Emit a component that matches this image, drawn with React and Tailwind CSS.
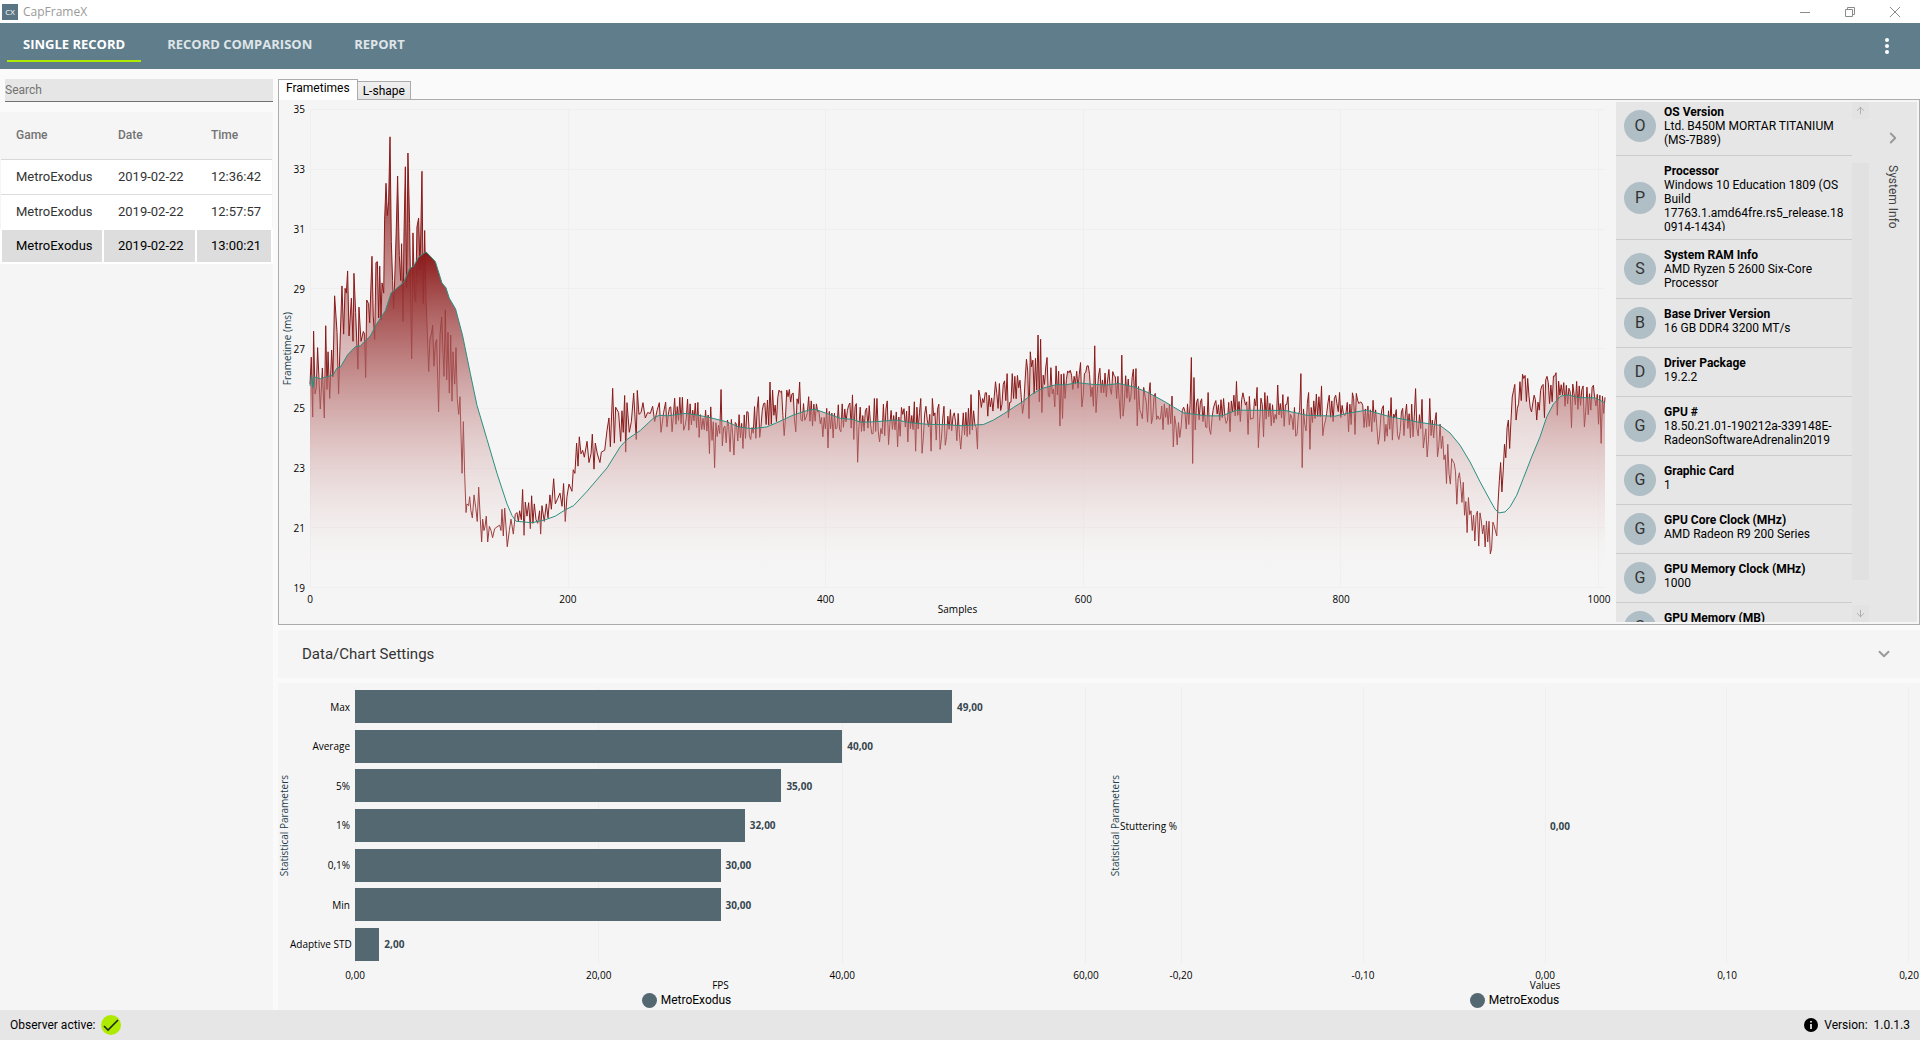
import { ArrowDown, ArrowUp, ChevronDown, ChevronRight } from "lucide-react";

const records = [
  { game: "MetroExodus", date: "2019-02-22", time: "12:36:42" },
  { game: "MetroExodus", date: "2019-02-22", time: "12:57:57" },
  { game: "MetroExodus", date: "2019-02-22", time: "13:00:21", selected: true },
];

const systemInfo = [
  ["OS Version", "Ltd. B450M MORTAR TITANIUM (MS-7B89)"],
  ["Processor", "Windows 10 Education 1809 (OS Build 17763.1.amd64fre.rs5_release.180914-1434)"],
  ["System RAM Info", "AMD Ryzen 5 2600 Six-Core Processor"],
  ["Base Driver Version", "16 GB DDR4 3200 MT/s"],
  ["Driver Package", "19.2.2"],
  ["GPU #", "18.50.21.01-190212a-339148E-RadeonSoftwareAdrenalin2019"],
  ["Graphic Card", "1"],
  ["GPU Core Clock (MHz)", "AMD Radeon R9 200 Series"],
  ["GPU Memory Clock (MHz)", "1000"],
  ["GPU Memory (MB)", ""],
];

const fpsStats = [
  ["Max", 49],
  ["Average", 40],
  ["5%", 35],
  ["1%", 32],
  ["0,1%", 30],
  ["Min", 30],
  ["Adaptive STD", 2],
];

// Recorded trace, flat x/y lists. The head of the run is stored point by point.
const HEAD = [
  119, 880, 123, 805, 127, 972, 130, 732, 134, 908, 138, 890, 142, 778, 150, 950, 156, 835, 162, 975, 166, 717, 170, 895,
  173, 790, 178, 920, 184, 785, 188, 860, 193, 633, 200, 735, 205, 908, 210, 745, 215, 605, 220, 740, 224, 612, 228, 625,
  232, 563, 236, 745, 243, 640, 248, 760, 251, 570, 256, 680, 263, 838, 266, 665, 272, 760, 279, 733, 283, 740, 286, 862,
  289, 645, 295, 655, 298, 708, 305, 522, 309, 690, 313, 755, 317, 540, 321, 537, 325, 695, 328, 550, 332, 700, 335, 597,
  340, 625, 343, 420, 347, 318, 351, 408, 355, 370, 359, 188, 363, 480, 367, 590, 370, 670, 374, 560, 378, 440, 382, 298,
  387, 520, 391, 590, 394, 487, 398, 705, 401, 470, 405, 272, 409, 610, 413, 233, 418, 430, 424, 810, 428, 457, 433, 640,
  436, 650, 440, 440, 445, 415, 449, 560, 455, 284, 459, 655, 463, 450, 467, 640, 471, 740, 475, 845, 479, 750, 483, 740,
  487, 715, 491, 830, 495, 765, 499, 755, 505, 958, 509, 740, 514, 692, 521, 858, 525, 672, 529, 868, 533, 735, 537, 905,
  541, 743, 545, 928, 548, 790, 553, 880, 557, 778, 561, 920, 565, 965, 569, 915, 575, 1130, 579, 985, 583, 1130, 587, 1240,
  590, 1215, 595, 1220, 598, 1195, 602, 1235, 606, 1255, 611, 1190, 616, 1225, 621, 1265, 625, 1168, 630, 1260, 634, 1322,
  637, 1258, 641, 1290, 644, 1280, 648, 1250, 652, 1322, 657, 1278, 662, 1290, 667, 1310, 673, 1285, 680, 1280, 688, 1275,
  692, 1290, 695, 1230, 699, 1305, 703, 1227, 707, 1280, 711, 1335, 717, 1290, 722, 1258, 729, 1300, 735, 1245, 740, 1240,
  744, 1265, 748, 1235, 753, 1260, 757, 1175, 761, 1303, 765, 1210, 770, 1250, 775, 1212, 780, 1285, 784, 1193, 788, 1270,
  792, 1215, 797, 1260, 802, 1270, 808, 1235, 811, 1300, 815, 1220, 822, 1265, 828, 1215, 833, 1255, 839, 1190, 843, 1230,
  850, 1145, 855, 1215, 862, 1200, 869, 1185, 875, 1222, 880, 1158, 885, 1265, 890, 1195, 896, 1160, 905, 1180, 909, 1120,
  914, 1130, 919, 1045, 923, 1110, 927, 1028, 932, 1075, 937, 1065, 942, 1085, 950, 1040, 956, 1100, 962, 1075, 966, 1020,
  971, 1118, 975, 1045, 981, 1075, 989, 1100, 993, 1070, 1003, 1065, 1010, 1010, 1016, 975, 1020, 1055, 1027, 892, 1032, 1045,
  1036, 945, 1045, 960, 1051, 1040, 1055, 955, 1059, 1015, 1063, 912, 1066, 1070, 1070, 932, 1077, 1015, 1083, 985, 1090, 905,
  1098, 1035, 1101, 898, 1106, 965, 1112, 960, 1118, 932, 1125, 975, 1132, 960, 1140, 962, 1147, 942, 1153, 985, 1160, 955,
  1167, 932, 1172, 1015, 1180, 960, 1186, 930, 1190, 1000,
];

// The rest is a base level with jitter, and the single outliers on top.
const BASE = [
  22, 335, 100, 345, 120, 375, 200, 395, 240, 385, 280, 370, 320, 345, 350, 320, 400, 320, 440, 320, 470, 355, 500, 370,
  530, 365, 570, 340, 600, 355, 700, 360, 780, 370, 900, 375, 940, 355, 970, 330, 1000, 300, 1040, 280, 1090, 270, 1110, 240,
  1150, 240, 1200, 255, 1250, 240, 1300, 245, 1400, 260, 1430, 290, 1460, 320, 1500, 325, 1530, 345, 1550, 390, 1580, 345,
  1640, 345, 1700, 320, 1740, 325, 1870, 330, 1900, 370, 1940, 350, 1970, 330, 2040, 325, 2120, 340, 2160, 360, 2300, 370,
  2330, 385, 2350, 430, 2360, 470, 2380, 530, 2400, 560, 2415, 610, 2430, 665, 2455, 680, 2480, 690, 2495, 720, 2510, 670,
  2520, 560, 2528, 500, 2540, 440, 2552, 340, 2560, 300, 2570, 280, 2580, 260, 2605, 270, 2630, 320, 2650, 300, 2656, 260,
  2680, 265, 2700, 270, 2740, 290, 2790, 300, 2835, 320,
];

const OUTLIERS = [
  36, 395, 82, 297, 86, 390, 112, 307, 116, 412, 148, 460, 152, 320, 163, 502, 182, 268, 186, 437, 210, 455, 221, 465,
  248, 445, 271, 418, 295, 290, 299, 412, 329, 246, 333, 372, 337, 270, 357, 270, 372, 406, 380, 270, 388, 268, 406, 395,
  418, 246, 444, 290, 488, 410, 503, 443, 534, 314, 577, 284, 581, 418, 588, 310, 592, 486, 643, 295, 650, 295, 658, 425,
  681, 302, 685, 433, 712, 440, 724, 322, 743, 425, 763, 305, 767, 453, 781, 295, 785, 459, 797, 318, 812, 453, 817, 295,
  835, 312, 839, 448, 851, 318, 855, 435, 871, 328, 901, 447, 928, 403, 932, 283, 952, 447, 956, 270, 968, 295, 1006, 245,
  1018, 250, 1041, 220, 1045, 352, 1057, 220, 1079, 240, 1087, 340, 1099, 177, 1106, 355, 1110, 155, 1118, 180, 1126, 175,
  1133, 105, 1137, 305, 1141, 117, 1145, 337, 1160, 172, 1183, 320, 1188, 197, 1199, 378, 1203, 222, 1207, 355, 1222, 212,
  1261, 187, 1265, 320, 1280, 197, 1299, 318, 1303, 137, 1307, 337, 1315, 225, 1345, 208, 1381, 355, 1385, 165, 1389, 348,
  1420, 207, 1427, 205, 1431, 377, 1470, 247, 1474, 370, 1488, 358, 1508, 388, 1536, 288, 1540, 440, 1559, 412, 1593, 172,
  1597, 490, 1602, 232, 1635, 380, 1644, 277, 1651, 403, 1710, 395, 1729, 244, 1764, 403, 1791, 262, 1795, 442, 1811, 410,
  1815, 277, 1852, 255, 1883, 290, 1906, 408, 1922, 220, 1926, 502, 1945, 277, 1949, 448, 1984, 257, 1988, 406, 2026, 285,
  2065, 395, 2077, 278, 2085, 403, 2089, 280, 2138, 300, 2154, 432, 2173, 423, 2193, 292, 2197, 420, 2218, 418, 2240, 312,
  2254, 312, 2266, 265, 2286, 298, 2290, 443, 2301, 470, 2308, 295, 2332, 470, 2358, 550, 2362, 432, 2389, 612, 2398, 518,
  2413, 645, 2421, 697, 2425, 592, 2452, 633, 2456, 738, 2474, 740, 2495, 745, 2521, 487, 2525, 575, 2544, 360, 2548, 445,
  2560, 272, 2568, 360, 2578, 245, 2590, 235, 2630, 360, 2652, 352, 2656, 238, 2682, 228, 2690, 345, 2713, 247, 2733, 382,
  2738, 252, 2769, 257, 2773, 380, 2796, 262, 2814, 372, 2823, 430, 2827, 288, 2832, 340,
];

const AVERAGE_HEAD = [
  119, 885, 124, 855, 128, 890, 132, 860, 150, 865, 162, 862, 188, 855, 200, 835, 210, 833, 232, 798, 255, 775, 270, 773,
  300, 745, 320, 710, 345, 675, 362, 625, 375, 615, 400, 595, 418, 557, 430, 550, 445, 525, 467, 510, 480, 522, 495, 537,
  515, 597, 527, 610, 537, 640, 556, 670, 577, 745, 600, 850, 620, 940, 650, 1035, 680, 1130, 710, 1215, 725, 1248, 737, 1264,
  785, 1268, 825, 1260, 855, 1250, 885, 1232, 910, 1220, 950, 1180, 1010, 1115, 1050, 1055, 1070, 1035, 1110, 1010, 1150, 975,
  1167, 967,
];

const AVERAGE_TAIL = [
  22, 347, 75, 340, 110, 344, 150, 352, 200, 365, 235, 380, 275, 386, 320, 380, 350, 368, 400, 344, 445, 330, 465, 327,
  500, 340, 540, 354, 580, 358, 600, 366, 640, 365, 710, 360, 750, 368, 800, 372, 870, 374, 900, 377, 970, 373, 1000, 360,
  1030, 342, 1060, 322, 1090, 303, 1115, 282, 1145, 265, 1190, 253, 1215, 255, 1250, 247, 1300, 253, 1340, 255, 1375, 250,
  1420, 260, 1460, 275, 1510, 302, 1540, 320, 1570, 338, 1640, 347, 1685, 347, 1730, 330, 1875, 331, 1940, 345, 2025, 348,
  2060, 340, 2120, 330, 2190, 350, 2280, 367, 2340, 376, 2370, 398, 2400, 435, 2430, 485, 2460, 545, 2490, 600, 2505, 627,
  2517, 638, 2535, 635, 2550, 620, 2570, 585, 2590, 535, 2615, 470, 2640, 410, 2660, 350, 2680, 312, 2702, 288, 2725, 284,
  2755, 292, 2805, 293, 2835, 308,
];

const pairs = (list) => {
  const out = [];
  for (let i = 0; i < list.length; i += 2) out.push([list[i], list[i + 1]]);
  return out;
};

// stored units -> [sample, ms]
const fromHead = ([x, y]) => [(x - 119) / 3.866, 35 - (y - 110) / 83.8];
const fromTail = ([x, y]) => [400 + (x - 496) / 3.866, 27 - (y - 145) / 89.8];

const lerpAt = (points, x) => {
  const i = points.findIndex((p) => p[0] >= x);
  if (i <= 0) return points[i === 0 ? 0 : points.length - 1][1];
  const [x0, y0] = points[i - 1];
  const [x1, y1] = points[i];
  return y0 + ((y1 - y0) * (x - x0)) / (x1 - x0);
};

const buildFrametimes = () => {
  const points = pairs(HEAD).map(fromHead);
  const base = pairs(BASE).map(fromTail);
  const outliers = new Map(pairs(OUTLIERS).map(fromTail).map(([s, ms]) => [Math.round(s), ms]));
  let seed = 77;
  for (let s = 278; s <= 1005; s++) {
    seed = (seed * 16807) % 2147483647;
    // mostly swings from one sample to the next
    const size = 0.1 + (seed / 2147483647) * 0.45;
    const jitter = (s % 2 ? 1 : -1) * (seed % 5 ? size : -size);
    points.push([s, outliers.has(s) ? outliers.get(s) : lerpAt(base, s) + jitter]);
  }
  return points;
};

const toPath = (points) =>
  "M" + points.map(([s, ms]) => `${s.toFixed(1)} ${((35 - ms) * 100).toFixed(0)}`).join("L");
const toArea = (points) => `${toPath(points)}L1005 1600L0 1600Z`;

const frametimes = buildFrametimes();
const movingAverage = [...pairs(AVERAGE_HEAD).map(fromHead), ...pairs(AVERAGE_TAIL).map(fromTail)];

function TickRow({ ticks, className = "" }) {
  return (
    <div className={`flex h-[10px] justify-between leading-[10px] ${className}`}>
      {ticks.map((tick) => (
        <span key={tick} className="flex w-0 justify-center whitespace-nowrap">{tick}</span>
      ))}
    </div>
  );
}

function GridLines({ count, className = "" }) {
  return (
    <div className={`col-start-1 row-start-1 flex justify-between ${className}`}>
      {Array.from({ length: count }, (_, i) => (
        <div key={i} className="w-px bg-[#efefef]" />
      ))}
    </div>
  );
}

function AxisTitle({ children }) {
  return (
    <div className="flex w-3 shrink-0 items-center justify-center">
      <span className="rotate-180 whitespace-nowrap text-[#1d3f4d] [writing-mode:vertical-rl]">{children}</span>
    </div>
  );
}

function Legend() {
  return (
    <div className="mt-0.5 flex items-center justify-center gap-1 font-[Roboto,sans-serif] text-[12px] leading-4">
      <span className="size-[15px] rounded-full bg-[#546872]" />
      MetroExodus
    </div>
  );
}

function TitleBar() {
  return (
    <div className="flex h-[23px] shrink-0 items-center bg-white pl-0.5 pr-0.5">
      <span className="flex size-4 items-center justify-center bg-[#5a7684] text-[8px] text-white">CX</span>
      <span className="ml-[5px] flex-1 text-[12px] text-[#999]">CapFrameX</span>
      <div className="flex text-[#8a8a8a]">
        <button aria-label="Minimize" className="flex h-5 w-[45px] items-center justify-center">
          <svg width="10" height="10" viewBox="0 0 10 10" stroke="currentColor" fill="none"><path d="M0 5.5h10" /></svg>
        </button>
        <button aria-label="Restore" className="flex h-5 w-[45px] items-center justify-center">
          <svg width="10" height="10" viewBox="0 0 10 10" stroke="currentColor" fill="none"><path d="M.5 2.5h7v7h-7zM2.5 2.5v-2h7v7h-2" /></svg>
        </button>
        <button aria-label="Close" className="flex h-5 w-[46px] items-center justify-center">
          <svg width="10" height="10" viewBox="0 0 10 10" stroke="currentColor" fill="none"><path d="M0 0l10 10M10 0L0 10" /></svg>
        </button>
      </div>
    </div>
  );
}

function NavBar() {
  return (
    <nav className="flex h-[46px] shrink-0 items-center bg-[#607d8b] pl-[7px] pr-[19px] text-[13px] font-bold text-[#dfe5e8]">
      <button className="h-8 border-b-2 border-[#aeea00] px-4 text-white">SINGLE RECORD</button>
      <button className="ml-[10px] h-8 border-b-2 border-transparent px-4">RECORD COMPARISON</button>
      <button className="ml-[10px] h-8 border-b-2 border-transparent px-4">REPORT</button>
      <button aria-label="More" className="ml-auto flex w-7 justify-center text-white">
        <svg width="4" height="16" viewBox="0 0 4 16" fill="currentColor">
          <circle cx="2" cy="2" r="2" />
          <circle cx="2" cy="8" r="2" />
          <circle cx="2" cy="14" r="2" />
        </svg>
      </button>
    </nav>
  );
}

function RecordList() {
  return (
    <aside className="flex w-[273px] shrink-0 flex-col font-[Roboto,sans-serif]">
      <input
        aria-label="Search"
        placeholder="Search"
        className="ml-[5px] mt-[10px] h-[23px] border-b border-[#707070] bg-[#e6e6e6] text-[12px] outline-none placeholder:text-[#737373]"
      />
      <div className="mt-[10px] flex-1 bg-[#f5f5f5]">
        <table className="w-full table-fixed border-collapse text-left text-[13px] text-[#333]">
          <thead>
            <tr className="h-[47px] border-b border-[#d9d9d9] text-[12px] text-[#737373]">
              <th className="w-[102px] pl-[15px] font-medium">Game</th>
              <th className="w-[93px] pl-[15px] font-medium">Date</th>
              <th className="pl-[15px] font-medium">Time</th>
            </tr>
          </thead>
          <tbody>
            {records.map((r) => (
              <tr
                key={r.time}
                className={
                  r.selected
                    ? "h-[34px] border-b border-[#dcdcdc] bg-[#dddddd] text-black [&>td]:border-2 [&>td]:border-white"
                    : "h-[35px] border-b border-[#dcdcdc] bg-white"
                }
              >
                <td className={r.selected ? "pl-[14px]" : "pl-[15px]"}>{r.game}</td>
                <td className={r.selected ? "pl-[14px]" : "pl-[15px]"}>{r.date}</td>
                <td className={r.selected ? "pl-[14px]" : "pl-[15px]"}>{r.time}</td>
              </tr>
            ))}
          </tbody>
        </table>
      </div>
    </aside>
  );
}

function FrametimeChart() {
  return (
    <div className="flex min-w-0 flex-1 text-[10px] leading-4">
      <div className="flex pb-9 pl-0.5 pt-[9px]">
        <AxisTitle>Frametime (ms)</AxisTitle>
        <div className="flex w-3 flex-col justify-between text-right">
          {[35, 33, 31, 29, 27, 25, 23, 21, 19].map((v) => (
            <span key={v} className="flex h-0 items-center justify-end">{v}</span>
          ))}
        </div>
      </div>
      <div className="ml-[5px] mr-[11px] flex min-w-0 flex-1 flex-col pt-[9px]">
        <div className="grid min-h-0 flex-1 grid-cols-1 grid-rows-1">
          <div className="col-start-1 row-start-1 flex flex-col justify-between">
            {Array.from({ length: 9 }, (_, i) => (
              <div key={i} className="h-px bg-[#efefef]" />
            ))}
          </div>
          <GridLines count={6} className="mr-[6px]" />
          <svg
            className="col-start-1 row-start-1 h-full min-h-0 w-full overflow-visible"
            viewBox="0 0 1005 1600"
            preserveAspectRatio="none"
            fill="none"
            role="img"
            aria-label="Frametimes"
          >
            <defs>
              <linearGradient id="raw" gradientUnits="userSpaceOnUse" x1="0" x2="0" y1="90" y2="1600">
                <stop offset="0" stopColor="#8b1a1a" />
                <stop offset="1" stopColor="#ffffff" stopOpacity="0" />
              </linearGradient>
              <linearGradient id="avg" gradientUnits="userSpaceOnUse" x1="0" x2="0" y1="480" y2="1600">
                <stop offset="0" stopColor="#8b1a1a" />
                <stop offset="1" stopColor="#ffffff" stopOpacity="0" />
              </linearGradient>
            </defs>
            <path d={toArea(frametimes)} fill="url(#raw)" />
            <path d={toPath(frametimes)} stroke="#8b1a1a" strokeWidth="1" vectorEffect="non-scaling-stroke" />
            <path d={toArea(movingAverage)} fill="url(#avg)" />
            <path d={toPath(movingAverage)} stroke="#2a8f80" strokeWidth="1" vectorEffect="non-scaling-stroke" />
          </svg>
        </div>
        <div className="flex h-9 flex-col pt-[6px]">
          <TickRow ticks={["0", "200", "400", "600", "800", "1000"]} className="mr-[6px]" />
          <div className="text-center leading-[10px]">Samples</div>
        </div>
      </div>
    </div>
  );
}

function SystemInfo() {
  return (
    <div className="my-0.5 mr-0.5 flex w-[301px] shrink-0 bg-[#e6e6e6] font-[Roboto,sans-serif] text-[12px] leading-[14px]">
      <div className="h-0 min-h-full w-[236px] overflow-hidden">
        <ul className="-mt-[5px]">
          {systemInfo.map(([name, value]) => (
            <li key={name} className="flex items-center gap-2 border-b border-[#cccccc] px-2 py-2">
              <span className="flex size-8 shrink-0 items-center justify-center rounded-full bg-[#b0bec5] text-[16px] text-[#333]">
                {name[0]}
              </span>
              <div className="max-h-[67px] w-[180px] self-start overflow-hidden break-words">
                <div className="font-bold">{name}</div>
                <div>{value}</div>
              </div>
            </li>
          ))}
        </ul>
      </div>
      <div className="flex w-[17px] flex-col bg-[#e6e6e6]">
        <button aria-label="Scroll up" className="flex h-[17px] items-center justify-center bg-[#e3e3e3]">
          <ArrowUp size={11} className="text-[#a8a8a8]" />
        </button>
        <div className="mb-[25px] mt-[44px] flex-1 bg-[#e1e1e1]" />
        <button aria-label="Scroll down" className="flex h-[17px] items-center justify-center bg-[#e3e3e3]">
          <ArrowDown size={11} className="text-[#a8a8a8]" />
        </button>
      </div>
      <button className="flex flex-1 flex-col items-center gap-[18px] pt-[27px] text-[#444]">
        <ChevronRight size={18} strokeWidth={2.5} className="text-[#999]" />
        <span className="[writing-mode:vertical-rl]">System Info</span>
      </button>
    </div>
  );
}

function FpsChart() {
  return (
    <div className="flex w-[817px] min-w-0 shrink flex-col">
      <div className="flex flex-1">
        <AxisTitle>Statistical Parameters</AxisTitle>
        <div className="flex w-[60px] flex-col justify-around text-right">
          {fpsStats.map(([name]) => (
            <span key={name} className="whitespace-nowrap">{name}</span>
          ))}
        </div>
        <div className="ml-[5px] mr-[9px] grid flex-1 grid-cols-1 grid-rows-1">
          <GridLines count={4} />
          <div className="col-start-1 row-start-1 flex flex-col justify-around">
            {fpsStats.map(([name, value]) => (
              <div key={name} className="flex items-center gap-[5px]">
                <div className="h-[33px] bg-[#546872]" style={{ width: `${(value / 60) * 100}%` }} />
                <span className="font-bold text-[#37474f]">{value},00</span>
              </div>
            ))}
          </div>
        </div>
      </div>
      <TickRow ticks={["0,00", "20,00", "40,00", "60,00"]} className="ml-[77px] mr-[9px] mt-[6px]" />
      <div className="ml-[77px] mr-[9px] text-center leading-[10px]">FPS</div>
      <Legend />
    </div>
  );
}

function StutterChart() {
  return (
    <div className="ml-[14px] flex min-w-0 flex-1 flex-col">
      <div className="flex flex-1">
        <AxisTitle>Statistical Parameters</AxisTitle>
        <div className="flex w-[56px] items-center justify-end whitespace-nowrap">Stuttering %</div>
        <div className="ml-1 mr-[11px] grid flex-1 grid-cols-1 grid-rows-1">
          <GridLines count={5} />
          <div className="col-start-1 row-start-1 ml-[50%] flex items-center pl-[5px] font-bold text-[#37474f]">0,00</div>
        </div>
      </div>
      <TickRow ticks={["-0,20", "-0,10", "0,00", "0,10", "0,20"]} className="ml-[72px] mr-[11px] mt-[6px]" />
      <div className="ml-[72px] mr-[11px] text-center leading-[10px]">Values</div>
      <Legend />
    </div>
  );
}

export default function App() {
  return (
    <div className="flex h-screen flex-col overflow-hidden bg-[#fafafa] font-['Open_Sans','Noto_Sans',sans-serif] text-black">
      <TitleBar />
      <NavBar />
      <div className="flex min-h-0 flex-1">
        <RecordList />
        <main className="ml-[5px] flex min-w-0 flex-1 flex-col pt-[10px]">
          <div role="tablist" className="flex items-end font-[Roboto,sans-serif] text-[12px] leading-4">
            <button role="tab" aria-selected="true" className="z-10 -mb-px h-[21px] border border-b-0 border-[#acacac] bg-white px-[7px] pb-1">
              Frametimes
            </button>
            <button role="tab" aria-selected="false" className="h-[18px] border border-b-0 border-l-0 border-[#acacac] bg-gradient-to-b from-[#f0f0f0] to-[#e5e5e5] px-[5px]">
              L-shape
            </button>
          </div>
          <section className="flex min-h-0 flex-1 border border-[#acacac] bg-[#f5f5f5]">
            <FrametimeChart />
            <SystemInfo />
          </section>
          <button className="mt-[5px] flex h-12 shrink-0 items-center justify-between bg-[#f5f5f5] pl-6 pr-[27px] font-[Roboto,sans-serif] text-[15px] text-[#333]">
            Data/Chart Settings
            <ChevronDown size={18} strokeWidth={2.5} className="text-[#999]" />
          </button>
          <section className="mt-[5px] flex h-[327px] shrink-0 bg-[#f5f5f5] pb-0.5 pt-1 text-[10px] leading-4">
            <FpsChart />
            <StutterChart />
          </section>
        </main>
      </div>
      <footer className="flex h-[30px] shrink-0 items-center justify-between bg-[#e6e6e6] px-[10px] font-[Roboto,sans-serif] text-[12px]">
        <div className="flex items-center gap-[5px]">
          Observer active:
          <svg width="20" height="20" viewBox="0 0 20 20" fill="none">
            <circle cx="10" cy="10" r="10" fill="#aeea00" />
            <path d="M3 11l4 4L17 5" stroke="#1b2b12" strokeWidth="1.6" />
          </svg>
        </div>
        <div className="flex items-center gap-[6px]">
          <svg width="14" height="14" viewBox="0 0 14 14">
            <circle cx="7" cy="7" r="7" fill="#000" />
            <path d="M6.2 3h1.6v1.6H6.2zM6.2 6h1.6v5H6.2z" fill="#fff" />
          </svg>
          <span className="whitespace-pre">Version:  1.0.1.3</span>
        </div>
      </footer>
    </div>
  );
}
